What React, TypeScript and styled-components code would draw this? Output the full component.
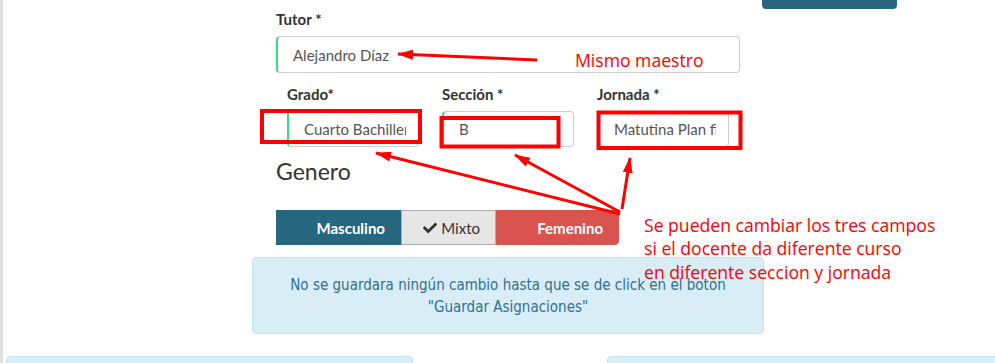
import styled, { createGlobalStyle } from 'styled-components'
import { FaCheck } from 'react-icons/fa'

const GlobalStyle = createGlobalStyle`
    body {
        margin: 0;
        font-family: Lato, "Open Sans", sans-serif;
        background: #ffffff;
    }
`

const Page = styled.div`
    position: relative;
    width: 995px;
    height: 363px;
    overflow: hidden;
    background: #ffffff;
    box-shadow: inset 3px 0 0 #e1e1e1;
`

const TopStrip = styled.div`
    display: flex;
    padding-left: 762px;
    height: 9px;
`

const SaveButton = styled.div`
    width: 135px;
    height: 9px;
    background: #27667f;
    border-radius: 0 0 4px 4px;
`

const Form = styled.div`
    margin-left: 276px;
    width: 464px;
`

const Label = styled.div`
    font-size: 15px;
    line-height: 20px;
    font-weight: 700;
    color: #333333;
    margin-bottom: 7px;
`

const Field = styled.div<{ $valid?: boolean; $height?: number }>`
    box-sizing: border-box;
    height: ${p => p.$height ?? 36}px;
    display: flex;
    align-items: center;
    padding: 0 12px 0 15px;
    border: 1px solid #cccccc;
    border-left: 2px solid ${p => (p.$valid ? '#33dd77' : '#cccccc')};
    border-radius: 4px;
    font-size: 15px;
    color: #555555;
`

const FieldText = styled.span`
    flex: 1;
    min-width: 0;
    white-space: nowrap;
    overflow: hidden;
`

const FieldRow = styled.div`
    display: grid;
    grid-template-columns: repeat(3, 155px);
    margin-top: 11px;
`

const FieldCol = styled.div`
    padding: 0 12px 0 11px;
`

const Heading = styled.h3`
    margin: 10px 0 25px;
    font-size: 23px;
    line-height: 28px;
    font-weight: 400;
    color: #333333;
`

const ButtonGroup = styled.div`
    display: flex;
    height: 35px;
`

const Toggle = styled.div<{ $tone: 'primary' | 'default' | 'danger'; $width: number }>`
    box-sizing: border-box;
    width: ${p => p.$width}px;
    display: flex;
    align-items: center;
    justify-content: flex-end;
    gap: 4px;
    padding-right: 15px;
    font-size: 15px;
    font-weight: ${p => (p.$tone === 'default' ? 400 : 700)};
    color: ${p => (p.$tone === 'default' ? '#333333' : '#ffffff')};
    background: ${p => (p.$tone === 'primary' ? '#27667f' : p.$tone === 'danger' ? '#d9534f' : '#e6e6e6')};
    border: 1px solid ${p => (p.$tone === 'primary' ? '#27667f' : p.$tone === 'danger' ? '#d9534f' : '#adadad')};
    &:last-child {
        border-radius: 0 4px 4px 0;
    }
`

const InfoBox = styled.div`
    box-sizing: border-box;
    margin: 12px 0 0 252px;
    width: 512px;
    height: 77px;
    padding: 16px 10px;
    background: #d9edf7;
    border: 1px solid #bce8f1;
    border-radius: 4px;
    color: #31708f;
    text-align: center;
    font-family: "DejaVu Sans Condensed", "DejaVu Sans", sans-serif;
    font-stretch: condensed;
    font-size: 15px;
    line-height: 22px;
`

const BottomRow = styled.div`
    display: flex;
    gap: 194px;
    margin-top: 22px;
    padding-left: 6px;
`

const BottomCard = styled.div<{ $width: number }>`
    flex: none;
    width: ${p => p.$width}px;
    height: 40px;
    background: #d9edf7;
    border: 1px solid #bce8f1;
    border-radius: 4px;
`

const Overlay = styled.svg`
    position: absolute;
    top: 0;
    left: 0;
    pointer-events: none;
`

const NoteText = styled.text`
    font-family: "Open Sans", sans-serif;
    font-size: 17.6px;
    fill: #ff0000;
`

export default function App() {
    return (
        <>
            <GlobalStyle />
            <Page>
                <TopStrip>
                    <SaveButton />
                </TopStrip>
                <Form>
                    <Label>Tutor *</Label>
                    <Field $valid $height={37}><FieldText>Alejandro Díaz</FieldText></Field>
                    <FieldRow>
                        <FieldCol>
                            <Label>Grado*</Label>
                            <Field $valid><FieldText>Cuarto Bachillerato</FieldText></Field>
                        </FieldCol>
                        <FieldCol>
                            <Label>Sección *</Label>
                            <Field $valid><FieldText>B</FieldText></Field>
                        </FieldCol>
                        <FieldCol>
                            <Label>Jornada *</Label>
                            <Field><FieldText>Matutina Plan fin de semana</FieldText></Field>
                        </FieldCol>
                    </FieldRow>
                    <Heading>Genero</Heading>
                    <ButtonGroup>
                        <Toggle $tone="primary" $width={125}>Masculino</Toggle>
                        <Toggle $tone="default" $width={95}><FaCheck size={14} />Mixto</Toggle>
                        <Toggle $tone="danger" $width={123}>Femenino</Toggle>
                    </ButtonGroup>
                </Form>
                <InfoBox>
                    No se guardara ningún cambio hasta que se de click en el boton
                    <br />
                    "Guardar Asignaciones"
                </InfoBox>
                <BottomRow>
                    <BottomCard $width={405} />
                    <BottomCard $width={400} />
                </BottomRow>

                <Overlay width={995} height={363} viewBox="0 0 995 363">
                    <defs>
                        <marker id="head" markerUnits="userSpaceOnUse" markerWidth="16" markerHeight="10" refX="15" refY="5" orient="auto">
                            <path d="M0,0 L16,5 L0,10 Z" fill="#ff0000" />
                        </marker>
                    </defs>
                    <g fill="none" stroke="#ff0000" strokeWidth="4">
                        <rect x="262" y="111" width="158" height="31" />
                        <rect x="441.5" y="118" width="117" height="28.5" />
                        <rect x="598.5" y="112.5" width="142" height="35.5" />
                    </g>
                    <g stroke="#ff0000" strokeWidth="3" markerEnd="url(#head)">
                        <line x1="537" y1="60" x2="398" y2="54" />
                        <line x1="620" y1="214" x2="376" y2="153" />
                        <line x1="620" y1="212" x2="515" y2="155" />
                        <line x1="622" y1="209" x2="630" y2="158" />
                    </g>
                    <NoteText x="575" y="66.7">Mismo maestro</NoteText>
                    <NoteText x="644" y="231.7">Se pueden cambiar los tres campos</NoteText>
                    <NoteText x="644" y="255">si el docente da diferente curso</NoteText>
                    <NoteText x="644" y="279.3">en diferente seccion y jornada</NoteText>
                </Overlay>
            </Page>
        </>
    )
}
